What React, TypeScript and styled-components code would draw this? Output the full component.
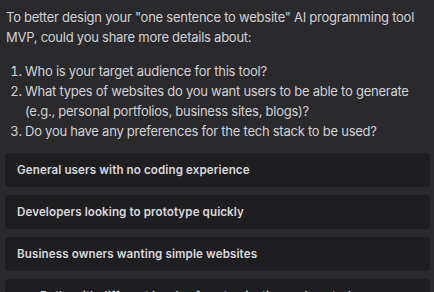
import React from 'react';
import styled, { createGlobalStyle } from 'styled-components';

const GlobalStyle = createGlobalStyle`
  html, body {
    margin: 0;
    padding: 0;
    background: #2a2a2d;
  }
  * { box-sizing: border-box; }
`;

const Page = styled.div`
  width: 434px;
  height: 292px;
  overflow: hidden;
  padding: 7px 4px 0 5px;
  background: #2a2a2d;
  font-family: Inter, "Liberation Sans", sans-serif;
`;

const Message = styled.div`
  padding-left: 1px;
  color: #d2d2d4;
  font-size: 13px;
  line-height: 20px;
  letter-spacing: -0.25px;
`;

const Paragraph = styled.p`
  margin: 0 0 14px;
`;

const Questions = styled.ol`
  margin: 0;
  padding-left: 19px;
`;

const Question = styled.li`
  padding-left: 0;
`;

const Options = styled.div`
  display: flex;
  flex-direction: column;
  gap: 8px;
  margin-top: 12px;
`;

const Option = styled.button<{ $indent?: number }>`
  display: flex;
  align-items: center;
  flex-shrink: 0;
  height: 34px;
  width: 100%;
  padding: 0 12px 0 ${({ $indent }) => $indent ?? 12}px;
  border: none;
  border-radius: 4px;
  background: #1e1e21;
  color: #d9d9dc;
  font-family: Inter, "Liberation Sans", sans-serif;
  font-size: 11.6px;
  font-weight: 600;
  letter-spacing: 0.1px;
  text-align: left;
  white-space: nowrap;
  cursor: pointer;
`;

const options = [
  { label: 'General users with no coding experience' },
  { label: 'Developers looking to prototype quickly' },
  { label: 'Business owners wanting simple websites' },
  { label: 'Both, with different levels of customization and control', indent: 35 },
];

export default function App() {
  return (
    <>
      <GlobalStyle />
      <Page>
        <Message>
          <Paragraph>
            To better design your "one sentence to website" AI programming tool MVP, could you share more details about:
          </Paragraph>
          <Questions>
            <Question>Who is your target audience for this tool?</Question>
            <Question>
              What types of websites do you want users to be able to generate (e.g., personal portfolios, business sites, blogs)?
            </Question>
            <Question>Do you have any preferences for the tech stack to be used?</Question>
          </Questions>
        </Message>
        <Options>
          {options.map((o) => (
            <Option key={o.label} $indent={o.indent}>
              {o.label}
            </Option>
          ))}
        </Options>
      </Page>
    </>
  );
}
